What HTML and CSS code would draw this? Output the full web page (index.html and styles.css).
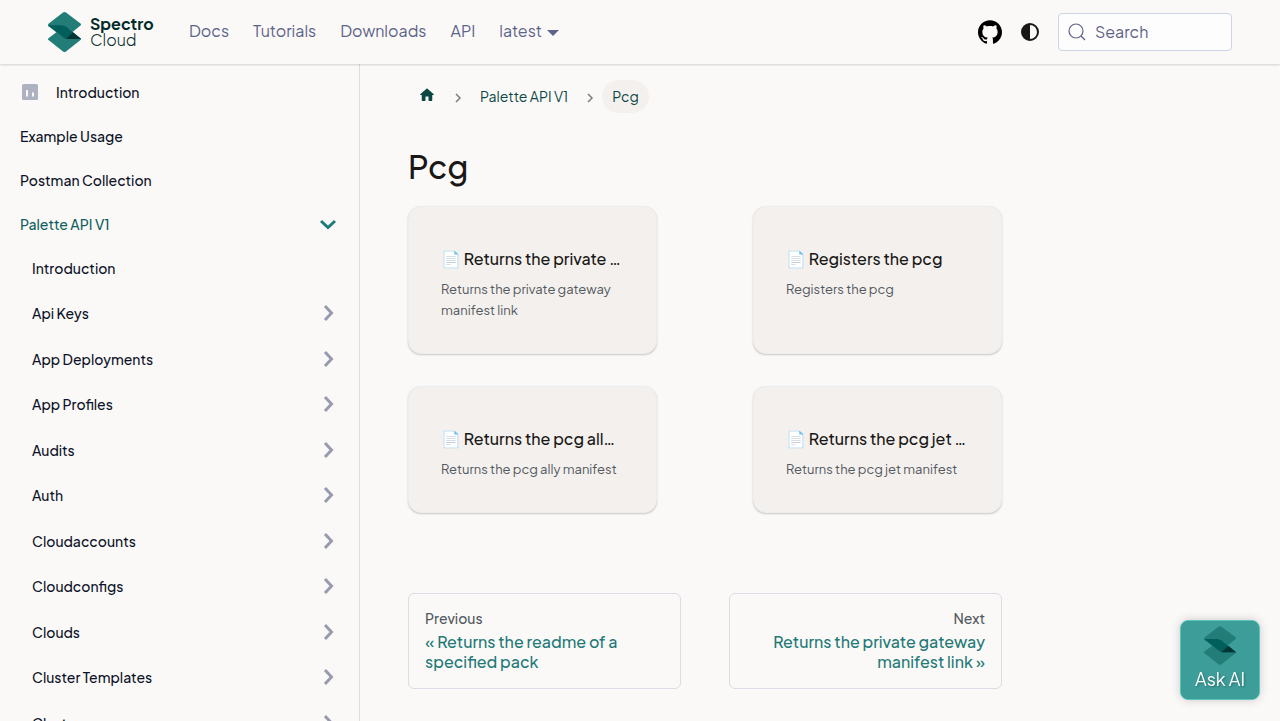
FILE: index.html
```html
<!DOCTYPE html>
<html lang="en">
<head>
<meta charset="utf-8">
<meta name="viewport" content="width=device-width, initial-scale=1">
<title>Pcg | Palette</title>
<link rel="stylesheet" href="styles.css">
</head>
<body>
<svg class="sprite" aria-hidden="true">
  <symbol id="logo" viewBox="0 0 33 40">
    <path d="M15 .6Q16.500-.5 18 .6L32.500 11.600Q33.500 12.500 32.500 13.400L16.500 26.500 .5 14.200Q-.5 13 .5 11.800Z" fill="#227d79"/>
    <path d="M16.500 14L32.500 26.300Q33.500 27.200 32.500 28.100L18 39.400Q16.500 40.500 15 39.400L.5 28.100Q-.5 27.200.5 26.200Z" fill="#227d79"/>
    <path d="M.3 13.200H13.500Q16 13.200 18 14.800L33 27H19.500Q17.500 27 15.500 25.500Z" fill="#005e5b"/>
    <path d="M25 20.300L33 27H18Z" fill="#053533"/>
  </symbol>
  <symbol id="chevron" viewBox="0 0 24 24">
    <path d="M9 5l6.500 7L9 19" fill="none" stroke="currentColor" stroke-width="3"/>
  </symbol>
</svg>
<header class="navbar">
  <a class="brand" href="#">
    <svg class="brand-mark" aria-hidden="true"><use href="#logo"/></svg>
    <span class="brand-name"><strong>Spectro</strong><span>Cloud</span></span>
  </a>
  <nav class="nav-links" aria-label="Main">
    <a href="#">Docs</a>
    <a href="#">Tutorials</a>
    <a href="#">Downloads</a>
    <a href="#">API</a>
    <a class="version" href="#">latest</a>
  </nav>
  <div class="nav-tools">
    <a class="github" href="#" aria-label="GitHub repository">
      <svg viewBox="0 0 24 24" width="24" height="24"><path d="M12 .297c-6.630 0-12 5.373-12 12 0 5.303 3.438 9.800 8.205 11.385.6.113.82-.258.82-.577 0-.285-.010-1.040-.015-2.040-3.338.724-4.042-1.610-4.042-1.610C4.422 18.070 3.633 17.700 3.633 17.700c-1.087-.744.084-.729.084-.729 1.205.084 1.838 1.236 1.838 1.236 1.070 1.835 2.809 1.305 3.495.998.108-.776.417-1.305.76-1.605-2.665-.3-5.466-1.332-5.466-5.930 0-1.310.465-2.380 1.235-3.220-.135-.303-.54-1.523.105-3.176 0 0 1.005-.322 3.300 1.230.96-.267 1.980-.399 3-.405 1.020.006 2.040.138 3 .405 2.280-1.552 3.285-1.230 3.285-1.230.645 1.653.24 2.873.12 3.176.765.840 1.230 1.910 1.230 3.220 0 4.610-2.805 5.625-5.475 5.920.42.360.81 1.096.81 2.220 0 1.606-.015 2.896-.015 3.286 0 .315.210.690.825.570C20.565 22.092 24 17.592 24 12.297c0-6.627-5.373-12-12-12"/></svg>
    </a>
    <button class="theme" type="button" aria-label="Switch color mode">
      <svg viewBox="0 0 24 24" width="24" height="24"><circle cx="12" cy="12" r="8" fill="none" stroke="#191817" stroke-width="2"/><path d="M12 4a8 8 0 0 0 0 16z" fill="#191817"/></svg>
    </button>
    <label class="search">
      <svg viewBox="0 0 20 20" width="20" height="20" aria-hidden="true"><circle cx="9" cy="9" r="7" fill="none" stroke="#5d6385" stroke-width="1.200"/><path d="M14 14l4 4" stroke="#5d6385" stroke-width="1.200"/></svg>
      <input type="search" placeholder="Search" aria-label="Search">
    </label>
  </div>
</header>
<div class="layout">
  <aside class="sidebar">
    <ul class="menu">
      <li><a href="#"><svg class="menu-icon" viewBox="0 0 16 16" aria-hidden="true"><rect width="16" height="16" rx="1.500" fill="#aeb1c0"/><path d="M5 6v6.500M11 8.500v4" stroke="#fbf9f7" stroke-width="2"/></svg>Introduction</a></li>
      <li><a href="#">Example Usage</a></li>
      <li><a href="#">Postman Collection</a></li>
      <li>
        <a class="active" href="#">Palette API V1<svg class="caret open" aria-hidden="true"><use href="#chevron"/></svg></a>
        <ul class="submenu">
          <li><a href="#">Introduction</a></li>
          <li><a href="#">Api Keys<svg class="caret" aria-hidden="true"><use href="#chevron"/></svg></a></li>
          <li><a href="#">App Deployments<svg class="caret" aria-hidden="true"><use href="#chevron"/></svg></a></li>
          <li><a href="#">App Profiles<svg class="caret" aria-hidden="true"><use href="#chevron"/></svg></a></li>
          <li><a href="#">Audits<svg class="caret" aria-hidden="true"><use href="#chevron"/></svg></a></li>
          <li><a href="#">Auth<svg class="caret" aria-hidden="true"><use href="#chevron"/></svg></a></li>
          <li><a href="#">Cloudaccounts<svg class="caret" aria-hidden="true"><use href="#chevron"/></svg></a></li>
          <li><a href="#">Cloudconfigs<svg class="caret" aria-hidden="true"><use href="#chevron"/></svg></a></li>
          <li><a href="#">Clouds<svg class="caret" aria-hidden="true"><use href="#chevron"/></svg></a></li>
          <li><a href="#">Cluster Templates<svg class="caret" aria-hidden="true"><use href="#chevron"/></svg></a></li>
          <li><a href="#">Clusters<svg class="caret" aria-hidden="true"><use href="#chevron"/></svg></a></li>
        </ul>
      </li>
    </ul>
  </aside>
  <main class="main">
    <div class="column">
      <nav class="crumbs" aria-label="Breadcrumbs">
        <a class="crumb home" href="#" aria-label="Home page"><svg viewBox="0 0 24 24" width="18" height="18"><path d="M10 19v-5h4v5c0 .55.45 1 1 1h3c.55 0 1-.45 1-1v-7h1.700c.46 0 .68-.57.33-.87L12.670 3.600c-.38-.34-.96-.34-1.340 0l-8.360 7.530c-.34.3-.13.87.33.87H5v7c0 .55.45 1 1 1h3c.55 0 1-.45 1-1z" fill="currentColor"/></svg></a>
        <svg class="sep" viewBox="0 0 8 10" aria-hidden="true"><path d="M2 1l4 4-4 4" fill="none" stroke="#7e7e7e" stroke-width="1.500"/></svg>
        <a class="crumb" href="#">Palette API V1</a>
        <svg class="sep" viewBox="0 0 8 10" aria-hidden="true"><path d="M2 1l4 4-4 4" fill="none" stroke="#7e7e7e" stroke-width="1.500"/></svg>
        <span class="crumb current">Pcg</span>
      </nav>
      <h1>Pcg</h1>
      <section class="cards">
        <a class="card" href="#"><h2>📄️ Returns the private gateway manifest link</h2><p>Returns the private gateway manifest link</p></a>
        <a class="card" href="#"><h2>📄️ Registers the pcg</h2><p>Registers the pcg</p></a>
        <a class="card" href="#"><h2>📄️ Returns the pcg ally manifest</h2><p>Returns the pcg ally manifest</p></a>
        <a class="card" href="#"><h2>📄️ Returns the pcg jet manifest</h2><p>Returns the pcg jet manifest</p></a>
      </section>
      <nav class="pager" aria-label="Docs pages">
        <a href="#"><span class="pager-hint">Previous</span><span class="pager-title">« Returns the readme of a specified pack</span></a>
        <a class="next" href="#"><span class="pager-hint">Next</span><span class="pager-title">Returns the private gateway manifest link »</span></a>
      </nav>
    </div>
  </main>
</div>
<button class="ask" type="button"><svg class="ask-mark" aria-hidden="true"><use href="#logo"/></svg>Ask AI</button>
</body>
</html>
```
FILE: styles.css
```css
* { box-sizing: border-box; }

body {
  margin: 0;
  height: 100vh;
  overflow: hidden;
  display: flex;
  flex-direction: column;
  background: #fbf9f7;
  color: #191817;
  font-family: "Plus Jakarta Sans", Inter, "Liberation Sans", sans-serif;
  font-size: 16px;
  text-rendering: optimizeLegibility;
}

a { color: inherit; text-decoration: none; }
ul { list-style: none; margin: 0; padding: 0; }
button { font: inherit; cursor: pointer; }
svg { flex: none; display: block; }
.sprite { position: absolute; width: 0; height: 0; }

.navbar {
  position: relative;
  z-index: 1;
  flex: none;
  display: flex;
  align-items: center;
  height: 64px;
  padding: 0 48px;
  background: #fbf9f7;
  box-shadow: 0 1px 2px rgba(0, 0, 0, 0.16);
}
.brand { display: flex; align-items: center; gap: 9px; color: #032b2a; }
.brand-mark { width: 33px; height: 40px; }
.brand-name {
  display: flex;
  flex-direction: column;
  font-size: 16px;
  line-height: 16px;
  font-weight: 300;
  width: 64px;
}
.brand-name strong { font-weight: 700; }
.nav-links { display: flex; gap: 24px; margin-left: 35px; line-height: 24px; color: #5d6489; padding-bottom: 2px; }
.version { display: flex; align-items: center; gap: 5px; }
.version::after {
  content: "";
  border: solid transparent;
  border-width: 6px 6px 0;
  border-top-color: currentColor;
  margin-top: 3px;
}
.nav-tools { display: flex; align-items: center; margin-left: auto; }
.theme { border: 0; background: none; padding: 4px; margin: 0 12px; }
.search {
  display: flex;
  align-items: center;
  gap: 8px;
  width: 174px;
  height: 38px;
  padding: 0 8px;
  border: 1px solid #d0d2e6;
  border-radius: 4px;
  background: #fdfdfd;
}
.search input {
  min-width: 0;
  flex: 1;
  padding: 0 0 2px;
  border: 0;
  outline: 0;
  background: none;
  font: inherit;
  color: #5d6385;
}
.search input::placeholder { color: #5d6385; opacity: 1; }

.layout { flex: 1; min-height: 0; display: flex; }
.sidebar {
  flex: none;
  width: 360px;
  padding: 6px 7px 0 8px;
  border-right: 1px solid #dadde1;
  overflow: hidden;
  font-size: 14px;
  font-weight: 500;
  color: #0c1228;
}
.menu a { display: flex; align-items: center; height: 44px; padding: 0 12px; }
.menu-icon { width: 16px; height: 16px; margin: 0 18px 0 2px; }
.menu .active { color: #0f615d; }
.caret { width: 24px; height: 24px; margin-left: auto; color: #989bae; }
.caret.open { transform: rotate(90deg); color: #1f7a78; }
.submenu { padding-left: 12px; }
.submenu li:nth-child(odd):not(:first-child) a { height: 45px; }
.submenu li:nth-child(even) a { height: 46px; }

.main { flex: 1; min-width: 0; padding: 16px 32px; }
.column { width: 75%; padding: 0 32px 0 16px; }
.crumbs { display: flex; align-items: center; font-size: 14px; line-height: 21px; color: #0b4744; }
.crumb { padding: 6px 10px; }
.home { padding-bottom: 9px; }
.sep { width: 8px; height: 10px; margin: 2px 8px 0; }
.current { background: #f4f0ed; border-radius: 32px; }

h1 { margin: 31px 0 17px; font-size: 32px; line-height: 45px; font-weight: 500; }

.cards { display: grid; grid-template-columns: 1fr 1fr; gap: 32px 96px; }
.card {
  min-width: 0;
  padding: 32px;
  border: 1px solid #ebedf0;
  border-radius: 13px;
  background: #f4f0ed;
  box-shadow: 0 1px 2px rgba(0, 0, 0, 0.2);
}
.card h2 {
  margin: 0;
  padding-right: 3px;
  font-size: 16px;
  line-height: 40px;
  font-weight: 500;
  overflow: hidden;
  white-space: nowrap;
  text-overflow: ellipsis;
}
.card p { margin: 0; font-size: 13px; line-height: 21px; color: #525860; }

.pager { display: grid; grid-template-columns: 1fr 1fr; gap: 48px; margin-top: 80px; }
.pager a { padding: 16px; border: 1px solid #dadde6; border-radius: 6px; }
.pager span { display: block; }
.pager-hint { font-size: 14px; line-height: 16px; margin-bottom: 6px; font-weight: 500; color: #525860; }
.pager-title { line-height: 20px; font-weight: 500; color: #1f7a78; }
.next { text-align: right; }

.ask {
  position: fixed;
  right: 20px;
  bottom: 21px;
  width: 80px;
  height: 80px;
  padding: 5px 0;
  display: flex;
  flex-direction: column;
  align-items: center;
  gap: 2px;
  border: 1px solid #5cc4bb;
  border-radius: 8px;
  background: #3d9d99;
  box-shadow: 0 0 10px rgba(0, 0, 0, 0.18);
  color: #fff;
  font-size: 18px;
  line-height: 24px;
  text-shadow: 1px 1px 2px rgba(0, 0, 0, 0.3);
}
.ask-mark { width: 32px; height: 39px; }
```
